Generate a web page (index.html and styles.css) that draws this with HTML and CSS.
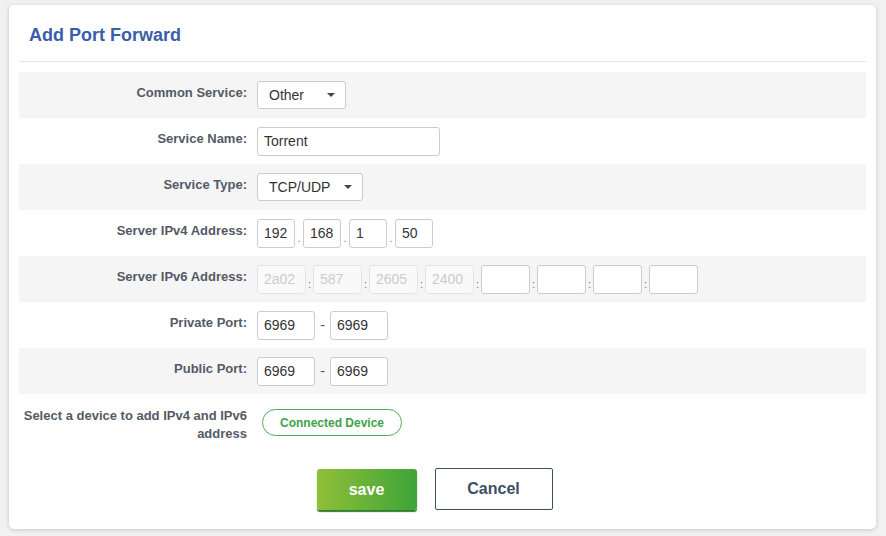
FILE: index.html
```html
<!DOCTYPE html>
<html lang="en">
<head>
    <meta charset="UTF-8">
    <title>Add Port Forward</title>
    <link rel="stylesheet" href="styles.css">
</head>
<body>
    <div class="card">
        <div class="card-header">
            <h1>Add Port Forward</h1>
        </div>

        <div class="form">
            <div class="form-row">
                <label class="form-label">Common Service:</label>
                <div class="form-control">
                    <div class="select select-service">Other<span class="caret"></span></div>
                </div>
            </div>

            <div class="form-row">
                <label class="form-label">Service Name:</label>
                <div class="form-control">
                    <input class="text-input name-input" type="text" value="Torrent">
                </div>
            </div>

            <div class="form-row">
                <label class="form-label">Service Type:</label>
                <div class="form-control">
                    <div class="select select-type">TCP/UDP<span class="caret"></span></div>
                </div>
            </div>

            <div class="form-row">
                <label class="form-label">Server IPv4 Address:</label>
                <div class="form-control">
                    <input class="text-input ip4" value="192"><span class="sep">.</span>
                    <input class="text-input ip4" value="168"><span class="sep">.</span>
                    <input class="text-input ip4" value="1"><span class="sep">.</span>
                    <input class="text-input ip4" value="50">
                </div>
            </div>

            <div class="form-row">
                <label class="form-label">Server IPv6 Address:</label>
                <div class="form-control">
                    <input class="text-input ip6" value="2a02" disabled><span class="sep">:</span>
                    <input class="text-input ip6" value="587" disabled><span class="sep">:</span>
                    <input class="text-input ip6" value="2605" disabled><span class="sep">:</span>
                    <input class="text-input ip6" value="2400" disabled><span class="sep">:</span>
                    <input class="text-input ip6"><span class="sep">:</span>
                    <input class="text-input ip6"><span class="sep">:</span>
                    <input class="text-input ip6"><span class="sep">:</span>
                    <input class="text-input ip6">
                </div>
            </div>

            <div class="form-row">
                <label class="form-label">Private Port:</label>
                <div class="form-control">
                    <input class="text-input port" value="6969"><span class="dash">-</span>
                    <input class="text-input port" value="6969">
                </div>
            </div>

            <div class="form-row">
                <label class="form-label">Public Port:</label>
                <div class="form-control">
                    <input class="text-input port" value="6969"><span class="dash">-</span>
                    <input class="text-input port" value="6969">
                </div>
            </div>

            <div class="form-row device-row">
                <label class="form-label">Select a device to add IPv4 and IPv6 address</label>
                <div class="form-control">
                    <button class="device-button">Connected Device</button>
                </div>
            </div>
        </div>

        <div class="actions">
            <button class="save-button">save</button>
            <button class="cancel-button">Cancel</button>
        </div>
    </div>
</body>
</html>
```

FILE: styles.css
```css
* {
    margin: 0;
    padding: 0;
    box-sizing: border-box;
}

body {
    font-family: "Liberation Sans", Arial, sans-serif;
    background: #f1f1f1;
    color: #333;
    padding: 5px 10px 7px 9px;
}

.card {
    width: 867px;
    height: 524px;
    background: white;
    border-radius: 5px;
    box-shadow: 0 1px 4px rgba(0, 0, 0, 0.18);
    padding: 0 10px;
}

.card-header {
    height: 57px;
    padding: 20px 0 0 10px;
    border-bottom: 1px solid #e6e6e6;
}

.card-header h1 {
    font-size: 18px;
    font-weight: bold;
    color: #3a5ea8;
}

.form {
    margin-top: 10px;
}

.form-row {
    display: flex;
    align-items: center;
    height: 46px;
}

.form-row:nth-child(odd) {
    background: #f5f5f5;
}

.form-label {
    width: 228px;
    padding-left: 10px;
    text-align: right;
    font-size: 13px;
    font-weight: bold;
    color: #545a66;
    line-height: 18px;
    margin-top: -4px;
}

.form-control {
    display: flex;
    align-items: center;
    margin-left: 10px;
}

.select {
    position: relative;
    height: 28px;
    border: 1px solid #ccc;
    border-radius: 3px;
    background: white;
    font-size: 14px;
    color: #333;
    line-height: 26px;
    padding-left: 11px;
}

.select-service {
    width: 89px;
}

.select-type {
    width: 106px;
}

.caret {
    position: absolute;
    right: 10px;
    top: 11px;
    border-left: 4px solid transparent;
    border-right: 4px solid transparent;
    border-top: 4px solid #444;
}

.text-input {
    height: 29px;
    border: 1px solid #ccc;
    border-radius: 3px;
    background: white;
    font-family: "Liberation Sans", Arial, sans-serif;
    font-size: 14px;
    color: #333;
    padding: 0 6px;
    outline: none;
}

.name-input {
    width: 183px;
}

.ip4 {
    width: 38px;
}

.ip6 {
    width: 49px;
}

.ip6:disabled {
    background: #f9f9f9;
    border-color: #e4e4e4;
    color: #ccc;
}

.sep {
    width: 8px;
    text-align: center;
    font-size: 11px;
    color: #777;
    padding-top: 10px;
}

.ip6 + .sep {
    width: 7px;
}

.port {
    width: 58px;
}

.dash {
    width: 15px;
    text-align: center;
    font-size: 14px;
    color: #555;
}

.device-row {
    height: 58px;
    align-items: flex-start;
    padding-top: 13px;
}

.device-row .form-label {
    margin-top: 0;
    padding-left: 0;
}

.device-row .form-control {
    margin-left: 15px;
    margin-top: 2px;
}

.device-button {
    width: 140px;
    height: 27px;
    border: 1px solid #4caf50;
    border-radius: 14px;
    background: white;
    color: #3ea447;
    font-family: "Liberation Sans", Arial, sans-serif;
    font-size: 12px;
    font-weight: bold;
}

.actions {
    display: flex;
    justify-content: center;
    gap: 18px;
    margin-top: 16px;
    padding-right: 16px;
}

.save-button {
    width: 100px;
    height: 41px;
    border: none;
    border-radius: 3px;
    background: linear-gradient(to right, #90bf38, #3fa43a);
    box-shadow: 0 2px 1px #2f7f30;
    color: white;
    font-family: "Liberation Sans", Arial, sans-serif;
    font-size: 16px;
    font-weight: bold;
    margin-top: 1px;
}

.cancel-button {
    width: 118px;
    height: 42px;
    border: 1px solid #3d4f61;
    border-radius: 2px;
    background: white;
    color: #3d4f61;
    font-family: "Liberation Sans", Arial, sans-serif;
    font-size: 16px;
    font-weight: bold;
}
```
